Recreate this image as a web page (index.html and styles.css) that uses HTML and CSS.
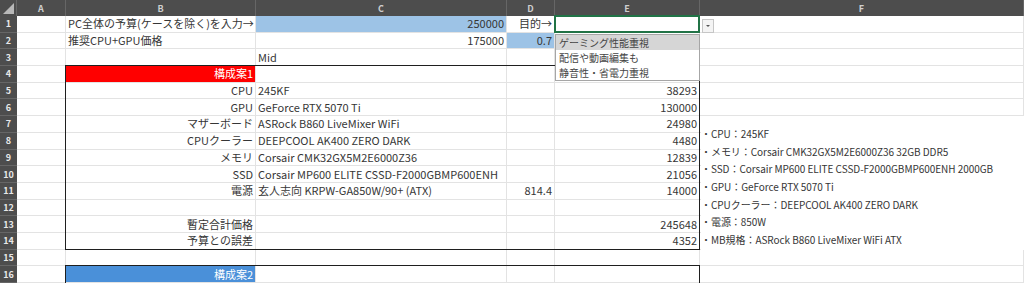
FILE: index.html
```html
<html>
<head>
    <meta charset="UTF-8">
    <title>PC構成シート</title>
    <link rel="stylesheet" href="styles.css">
</head>

<body>
    <div class="sheet">
        <div class="cells">
            <!-- 列見出し -->
            <div class="corner"><span class="tri"></span></div>
            <div class="colhead">A</div>
            <div class="colhead">B</div>
            <div class="colhead">C</div>
            <div class="colhead">D</div>
            <div class="colhead">E</div>
            <div class="colhead">F</div>

            <div class="rowhead">1</div>
            <div class="cell"></div>
            <div class="cell">PC全体の予算(ケースを除く)を入力→</div>
            <div class="cell num input">250000</div>
            <div class="cell num">目的→</div>
            <div class="cell"></div>
            <div class="cell"></div>

            <div class="rowhead">2</div>
            <div class="cell"></div>
            <div class="cell">推奨CPU+GPU価格</div>
            <div class="cell num">175000</div>
            <div class="cell num input">0.7</div>
            <div class="cell"></div>
            <div class="cell"></div>

            <div class="rowhead">3</div>
            <div class="cell"></div>
            <div class="cell"></div>
            <div class="cell">Mid</div>
            <div class="cell"></div>
            <div class="cell"></div>
            <div class="cell"></div>

            <div class="rowhead">4</div>
            <div class="cell"></div>
            <div class="cell num plan red">構成案1</div>
            <div class="cell"></div>
            <div class="cell"></div>
            <div class="cell"></div>
            <div class="cell"></div>

            <div class="rowhead">5</div>
            <div class="cell"></div>
            <div class="cell num">CPU</div>
            <div class="cell">245KF</div>
            <div class="cell"></div>
            <div class="cell num">38293</div>
            <div class="cell"></div>

            <div class="rowhead">6</div>
            <div class="cell"></div>
            <div class="cell num">GPU</div>
            <div class="cell">GeForce RTX 5070 Ti</div>
            <div class="cell"></div>
            <div class="cell num">130000</div>
            <div class="cell"></div>

            <div class="rowhead">7</div>
            <div class="cell"></div>
            <div class="cell num">マザーボード</div>
            <div class="cell">ASRock B860 LiveMixer WiFi</div>
            <div class="cell"></div>
            <div class="cell num">24980</div>
            <div class="cell"></div>

            <div class="rowhead">8</div>
            <div class="cell"></div>
            <div class="cell num">CPUクーラー</div>
            <div class="cell">DEEPCOOL AK400 ZERO DARK</div>
            <div class="cell"></div>
            <div class="cell num">4480</div>
            <div class="cell"></div>

            <div class="rowhead">9</div>
            <div class="cell"></div>
            <div class="cell num">メモリ</div>
            <div class="cell">Corsair CMK32GX5M2E6000Z36</div>
            <div class="cell"></div>
            <div class="cell num">12839</div>
            <div class="cell"></div>

            <div class="rowhead">10</div>
            <div class="cell"></div>
            <div class="cell num">SSD</div>
            <div class="cell">Corsair MP600 ELITE CSSD-F2000GBMP600ENH</div>
            <div class="cell"></div>
            <div class="cell num">21056</div>
            <div class="cell"></div>

            <div class="rowhead">11</div>
            <div class="cell"></div>
            <div class="cell num">電源</div>
            <div class="cell">玄人志向 KRPW-GA850W/90+ (ATX)</div>
            <div class="cell num">814.4</div>
            <div class="cell num">14000</div>
            <div class="cell"></div>

            <div class="rowhead">12</div>
            <div class="cell"></div>
            <div class="cell"></div>
            <div class="cell"></div>
            <div class="cell"></div>
            <div class="cell"></div>
            <div class="cell"></div>

            <div class="rowhead">13</div>
            <div class="cell"></div>
            <div class="cell num">暫定合計価格</div>
            <div class="cell"></div>
            <div class="cell"></div>
            <div class="cell num">245648</div>
            <div class="cell"></div>

            <div class="rowhead">14</div>
            <div class="cell"></div>
            <div class="cell num">予算との誤差</div>
            <div class="cell"></div>
            <div class="cell"></div>
            <div class="cell num">4352</div>
            <div class="cell"></div>

            <div class="rowhead">15</div>
            <div class="cell"></div>
            <div class="cell"></div>
            <div class="cell"></div>
            <div class="cell"></div>
            <div class="cell"></div>
            <div class="cell"></div>

            <div class="rowhead">16</div>
            <div class="cell"></div>
            <div class="cell num plan blue">構成案2</div>
            <div class="cell"></div>
            <div class="cell"></div>
            <div class="cell"></div>
            <div class="cell"></div>
        </div>

        <!-- 罫線・入力規則リスト・テキストボックス -->
        <div class="over">
            <div class="box box1"></div>
            <div class="box box2"></div>
            <div class="notes">
                <p>・CPU：245KF</p>
                <p>・メモリ：Corsair CMK32GX5M2E6000Z36 32GB DDR5</p>
                <p>・SSD：Corsair MP600 ELITE CSSD-F2000GBMP600ENH 2000GB</p>
                <p>・GPU：GeForce RTX 5070 Ti</p>
                <p>・CPUクーラー：DEEPCOOL AK400 ZERO DARK</p>
                <p>・電源：850W</p>
                <p>・MB規格：ASRock B860 LiveMixer WiFi ATX</p>
            </div>
            <div class="active"></div>
            <div class="dropbtn"><span class="arrow"></span></div>
            <div class="droplist">
                <div class="item hover">ゲーミング性能重視</div>
                <div class="item">配信や動画編集も</div>
                <div class="item">静音性・省電力重視</div>
            </div>
        </div>
    </div>
</body>
</html>
```

FILE: styles.css
```css
body {
    margin: 0;
    background: #ffffff;
    font-family: "Noto Sans CJK JP", "Noto Sans", sans-serif;
    font-size: 11px;
    color: #363636;
    overflow: hidden;
}

.sheet {
    display: grid;
    width: 1024px;
    height: 283px;
}

.sheet > .cells,
.sheet > .over {
    grid-area: 1 / 1;
}

.cells,
.over {
    display: grid;
    grid-template-columns: 17px 49px 190px 251px 48px 145px 324px;
    grid-template-rows: 16px repeat(16, 16.6875px);
}

.over {
    pointer-events: none;
}

/* 見出し */
.corner {
    background: #4d4d4d;
    position: relative;
    border-right: 1px solid #666;
}

.tri {
    position: absolute;
    right: 2px;
    bottom: 2px;
    width: 0;
    height: 0;
    border-left: 11px solid transparent;
    border-bottom: 11px solid #b8b8b8;
}

.colhead {
    background: #4d4d4d;
    color: #cfcfcf;
    font-size: 9px;
    font-weight: bold;
    display: flex;
    align-items: center;
    justify-content: center;
    border-right: 1px solid #666;
}

.rowhead {
    background: #4d4d4d;
    color: #e8e8e8;
    font-size: 9px;
    font-weight: bold;
    display: flex;
    align-items: center;
    justify-content: center;
    border-bottom: 1px solid #666;
}

/* セル */
.cell {
    border-right: 1px solid #e3e3e3;
    border-bottom: 1px solid #e3e3e3;
    padding: 0 2px;
    display: flex;
    align-items: center;
    white-space: nowrap;
    overflow: visible;
    line-height: 1;
}

.num {
    justify-content: flex-end;
}

.input {
    background: #9dc3e6;
}

.plan {
    color: #ffffff;
}

.red {
    background: #ff0000;
}

.blue {
    background: #4a90d9;
}

/* 罫線 */
.box {
    border: 1.5px solid #1f1f1f;
    margin: -1px 0 0 -1px;
}

.box1 {
    grid-column: 3 / 7;
    grid-row: 5 / 16;
}

.box2 {
    grid-column: 3 / 7;
    grid-row: 17 / 18;
    border-bottom: none;
}

/* テキストボックス */
.notes {
    grid-column: 7;
    grid-row: 8 / 16;
    background: #ffffff;
    margin-left: 1px;
    padding-top: 9px;
    font-size: 10px;
    letter-spacing: -0.05px;
}

.notes p {
    margin: 0;
    height: 17.6px;
    line-height: 17.6px;
    white-space: nowrap;
}

/* 選択セルと入力規則 */
.active {
    grid-column: 6;
    grid-row: 2;
    border: 2px solid #217346;
    margin: -1px 0 0 -1px;
}

.dropbtn {
    grid-column: 7;
    grid-row: 2;
    justify-self: start;
    align-self: start;
    width: 10px;
    height: 12px;
    margin: 3px 0 0 2px;
    border: 1px solid #c6c6c6;
    background: #f4f4f4;
    display: flex;
    align-items: center;
    justify-content: center;
}

.arrow {
    width: 0;
    height: 0;
    border-left: 2px solid transparent;
    border-right: 2px solid transparent;
    border-top: 2px solid #555;
}

.droplist {
    grid-column: 6;
    grid-row: 3 / 6;
    align-self: start;
    height: 45px;
    background: #ffffff;
    border: 1px solid #a6a6a6;
    margin-top: 1px;
    font-size: 10px;
}

.item {
    height: 15px;
    line-height: 15px;
    padding-left: 3px;
    color: #444;
}

.hover {
    background: #d6d6d6;
}
```
